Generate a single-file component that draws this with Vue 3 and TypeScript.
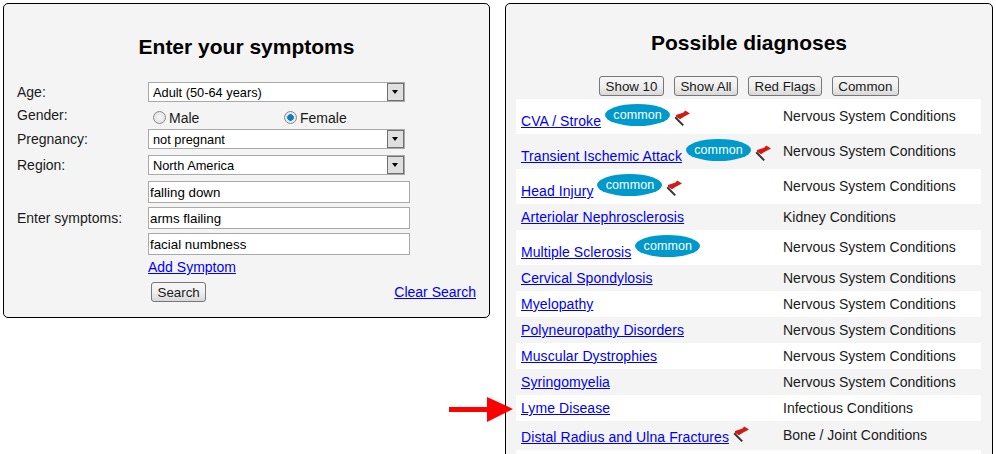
<script setup lang="ts">
interface Row {
  name: string
  category: string
  common?: boolean
  flag?: boolean
}

const rows: Row[] = [
  { name: 'CVA / Stroke', category: 'Nervous System Conditions', common: true, flag: true },
  { name: 'Transient Ischemic Attack', category: 'Nervous System Conditions', common: true, flag: true },
  { name: 'Head Injury', category: 'Nervous System Conditions', common: true, flag: true },
  { name: 'Arteriolar Nephrosclerosis', category: 'Kidney Conditions' },
  { name: 'Multiple Sclerosis', category: 'Nervous System Conditions', common: true },
  { name: 'Cervical Spondylosis', category: 'Nervous System Conditions' },
  { name: 'Myelopathy', category: 'Nervous System Conditions' },
  { name: 'Polyneuropathy Disorders', category: 'Nervous System Conditions' },
  { name: 'Muscular Dystrophies', category: 'Nervous System Conditions' },
  { name: 'Syringomyelia', category: 'Nervous System Conditions' },
  { name: 'Lyme Disease', category: 'Infectious Conditions' },
  { name: 'Distal Radius and Ulna Fractures', category: 'Bone / Joint Conditions', flag: true },
]

const filters = ['Show 10', 'Show All', 'Red Flags', 'Common']
</script>

<template>
  <div class="page">
    <section class="panel search">
      <h2 class="title search-title">Enter your symptoms</h2>
      <form class="form" @submit.prevent>
        <label class="label">Age:</label>
        <div class="select-wrap">
          <select class="select"><option>Adult (50-64 years)</option></select>
          <span class="arrow"></span>
        </div>

        <label class="label">Gender:</label>
        <div class="radios">
          <label class="radio"><input type="radio" name="gender" />Male</label>
          <label class="radio"><input type="radio" name="gender" checked />Female</label>
        </div>

        <label class="label">Pregnancy:</label>
        <div class="select-wrap">
          <select class="select"><option>not pregnant</option></select>
          <span class="arrow"></span>
        </div>

        <label class="label">Region:</label>
        <div class="select-wrap">
          <select class="select"><option>North America</option></select>
          <span class="arrow"></span>
        </div>

        <label class="label">Enter symptoms:</label>
        <div class="inputs">
          <input class="input" value="falling down" />
          <input class="input" value="arms flailing" />
          <input class="input" value="facial numbness" />
        </div>

        <a class="link add" href="#">Add Symptom</a>

        <div class="actions">
          <button class="btn" type="button">Search</button>
          <a class="link" href="#">Clear Search</a>
        </div>
      </form>
    </section>

    <section class="panel results">
      <h2 class="title results-title">Possible diagnoses</h2>
      <div class="filters">
        <button v-for="f in filters" :key="f" class="btn" type="button">{{ f }}</button>
      </div>
      <table class="table">
        <tbody>
          <tr v-for="r in rows" :key="r.name">
            <td class="name"><a class="link" href="#">{{ r.name }}</a><span v-if="r.common" class="pill">common</span><svg v-if="r.flag" class="flag" width="16" height="16" viewBox="0 0 16 16"><path d="M1.2 7.2 9.2 15.4" stroke="#333" stroke-width="2" fill="none" /><path d="M2 5 9.5 2.6 11.2 0.4 16 3.6 9.4 7 6 9.2 2 6.8Z" fill="#d01c14" /></svg></td>
            <td class="cat" :class="{ raised: r.common || r.flag }">{{ r.category }}</td>
          </tr>
          <tr>
            <td class="name">&nbsp;</td>
            <td class="cat">&nbsp;</td>
          </tr>
        </tbody>
      </table>
      <svg class="pointer" width="64" height="25" viewBox="0 0 64 25">
        <path d="M0 10H38V0L64 12 38 25V15H0Z" fill="#f00" />
      </svg>
    </section>
  </div>
</template>

<style>
html,
body {
  margin: 0;
  height: 100%;
  overflow: hidden;
  background: #fff;
}
</style>

<style scoped>
.page {
  display: flex;
  align-items: flex-start;
  gap: 15px;
  padding: 3px 0 0 3px;
  font: 14px/16px "Liberation Sans", Arial, sans-serif;
  color: #1a1a1a;
}

.panel {
  box-sizing: border-box;
  border: 1px solid #000;
  border-radius: 5px;
  background: #f4f4f4;
}

.search {
  width: 487px;
  padding: 0 13px 15px;
}

.results {
  position: relative;
  width: 488px;
  padding: 0 10px;
}

.title {
  margin: 0;
  font-size: 21px;
  line-height: 23px;
  font-weight: bold;
  color: #000;
  text-align: center;
}

.search-title {
  padding: 31px 0 24px;
}

.results-title {
  padding: 27px 0 22px;
}

.form {
  display: grid;
  grid-template-columns: 131px 1fr;
  row-gap: 6px;
  align-items: center;
}

.label {
  line-height: 15px;
}

.select-wrap {
  position: relative;
  width: 257px;
  height: 20px;
}

.select {
  display: block;
  box-sizing: border-box;
  width: 100%;
  height: 20px;
  padding: 0 0 0 4px;
  border: 1px solid #a9a9a9;
  border-radius: 0;
  background: #fff;
  font: 12.8px "Liberation Sans", Arial, sans-serif;
  color: #000;
  appearance: none;
}

.arrow {
  position: absolute;
  top: 1px;
  right: 1px;
  box-sizing: border-box;
  width: 17px;
  height: 18px;
  border: 1px solid #707070;
  background: #dfdfdf;
}

.arrow::after {
  content: "";
  position: absolute;
  left: 4px;
  top: 6px;
  border-style: solid;
  border-width: 4px 3.5px 0;
  border-color: #000 transparent transparent;
}

.radios {
  display: flex;
  height: 15px;
  padding-left: 5px;
}

.radio {
  display: flex;
  align-items: center;
  width: 131px;
  line-height: 16px;
  position: relative;
  top: 2px;
}

.radio input {
  box-sizing: border-box;
  width: 13px;
  height: 13px;
  margin: 0 3px 0 0;
  border: 1px solid #8a8a8a;
  border-radius: 50%;
  background: radial-gradient(circle, #f6f6f6 0%, #dcdcdc 100%);
  appearance: none;
}

.radio input:checked {
  background: radial-gradient(circle, #0f7fc0 0 3px, #e8e8e8 3.6px);
}

.inputs {
  display: flex;
  flex-direction: column;
  gap: 4px;
}

.input {
  box-sizing: border-box;
  width: 262px;
  height: 22px;
  padding: 0 1px;
  border: 1px solid #a9a9a9;
  border-radius: 0;
  background: #fff;
  font: 13.33px "Liberation Sans", Arial, sans-serif;
  color: #000;
  outline: none;
}

.link {
  color: #00e;
  text-decoration: underline;
}

.add {
  grid-column: 2;
  line-height: 12px;
}

.actions {
  grid-column: 2;
  display: flex;
  justify-content: space-between;
  align-items: center;
  margin-top: 3px;
  padding-left: 3px;
}

.btn {
  box-sizing: border-box;
  height: 20px;
  padding: 0 5.5px;
  border: 1px solid #777;
  border-radius: 3px;
  background: linear-gradient(#f6f6f6, #f0f0f0 50%, #d8d8d8);
  font: 13.33px "Liberation Sans", Arial, sans-serif;
  color: #1a1a1a;
}

.filters {
  display: flex;
  justify-content: center;
  gap: 10px;
  margin-bottom: 3px;
}

.table {
  width: 465px;
  border-collapse: collapse;
  table-layout: fixed;
}

.table tr:nth-child(odd) {
  background: #fff;
}

.table td {
  padding: 5px;
  vertical-align: middle;
}

.table td.raised {
  padding: 4px 5px 6px;
}

.name {
  width: 252px;
  white-space: nowrap;
}

.name .link {
  letter-spacing: 0.08px;
}

.pill {
  display: inline-block;
  overflow: hidden;
  box-sizing: border-box;
  width: 65px;
  height: 22px;
  margin-left: 4px;
  border-radius: 50%;
  background: #0099cc;
  color: #fff;
  font-size: 12.5px;
  line-height: 22px;
  letter-spacing: 0.1px;
  text-align: center;
}

.flag {
  margin-left: 4px;
  overflow: visible;
}

.pointer {
  position: absolute;
  left: -57px;
  top: 393px;
}
</style>
